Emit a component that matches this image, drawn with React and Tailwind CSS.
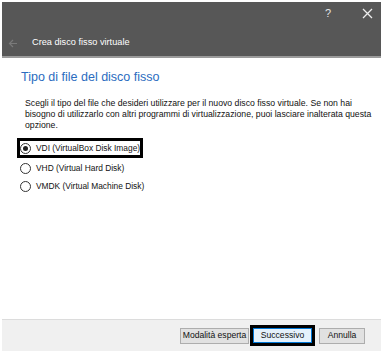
import React from 'react'

const font = { fontFamily: '"Liberation Sans", Arial, sans-serif' }

function Radio({ checked, label }) {
  return (
    <div className="flex items-center h-[14px] whitespace-nowrap">
      <span className="w-[11px] h-[11px] rounded-full border border-[#333] bg-white flex items-center justify-center shrink-0">
        {checked && <span className="w-[5px] h-[5px] rounded-full bg-[#222]" />}
      </span>
      <span className="ml-[5px] text-[8.4px] text-[#111]">{label}</span>
    </div>
  )
}

export default function App() {
  return (
    <div className="w-[383px] h-[354px] bg-white p-[2px] overflow-hidden" style={font}>
      <div className="w-full h-full flex flex-col bg-white">
        {/* dark header */}
        <div className="h-[56px] bg-[#575757] border-b-2 border-[#9b9b9b] flex flex-col">
          <div className="h-[22px] flex items-center justify-end text-[#e6e6e6]">
            <span className="text-[11px] mr-[31px]">?</span>
            <svg width="11" height="11" viewBox="0 0 11 11" className="mr-[8px]">
              <path d="M1 1 L10 10 M10 1 L1 10" stroke="#eee" strokeWidth="1.3" />
            </svg>
          </div>
          <div className="flex items-center h-[22px] mt-[8px]">
            <svg width="10" height="9" viewBox="0 0 10 9" className="ml-[6px]">
              <path d="M9 4.5 H1.5 M5 1 L1.5 4.5 L5 8" stroke="#7a7a7a" strokeWidth="1.2" fill="none" />
            </svg>
            <span className="ml-[14px] text-[9.2px] text-white">Crea disco fisso virtuale</span>
          </div>
        </div>

        {/* body */}
        <div className="flex-1 pl-[19px] pr-[6px]">
          <h1 className="mt-[11px] text-[12.5px] text-[#2b6cc0] leading-[16px]">Tipo di file del disco fisso</h1>
          <p className="mt-[13px] ml-[4px] text-[8.7px] leading-[11px] text-[#111] whitespace-nowrap">
            Scegli il tipo del file che desideri utilizzare per il nuovo disco fisso virtuale. Se non hai<br />
            bisogno di utilizzarlo con altri programmi di virtualizzazione, puoi lasciare inalterata questa<br />
            opzione.
          </p>
          <div className="mt-[7px] -ml-[4px] flex flex-col">
            <div className="border-[3px] border-black w-[126px]">
              <Radio checked label="VDI (VirtualBox Disk Image)" />
            </div>
            <div className="pl-[3px] mt-[3px]">
              <Radio label="VHD (Virtual Hard Disk)" />
            </div>
            <div className="pl-[3px] mt-[4px]">
              <Radio label="VMDK (Virtual Machine Disk)" />
            </div>
          </div>
        </div>

        {/* footer */}
        <div className="h-[32px] bg-[#f0f0f0] border-t border-[#dcdcdc] flex items-center justify-end pr-[16px] mb-[1px]">
          <button className="h-[16px] w-[69px] bg-[#e1e1e1] border border-[#adadad] text-[8.6px] text-[#111] whitespace-nowrap">Modalità esperta</button>
          <div className="ml-[1px] border-[3px] border-black flex">
            <button className="h-[15px] w-[59px] bg-[#e5f1fb] border border-[#0078d7] text-[8.6px] text-[#111]">Successivo</button>
          </div>
          <button className="ml-[4px] h-[16px] w-[46px] bg-[#e1e1e1] border border-[#adadad] text-[8.6px] text-[#111]">Annulla</button>
        </div>
      </div>
    </div>
  )
}
